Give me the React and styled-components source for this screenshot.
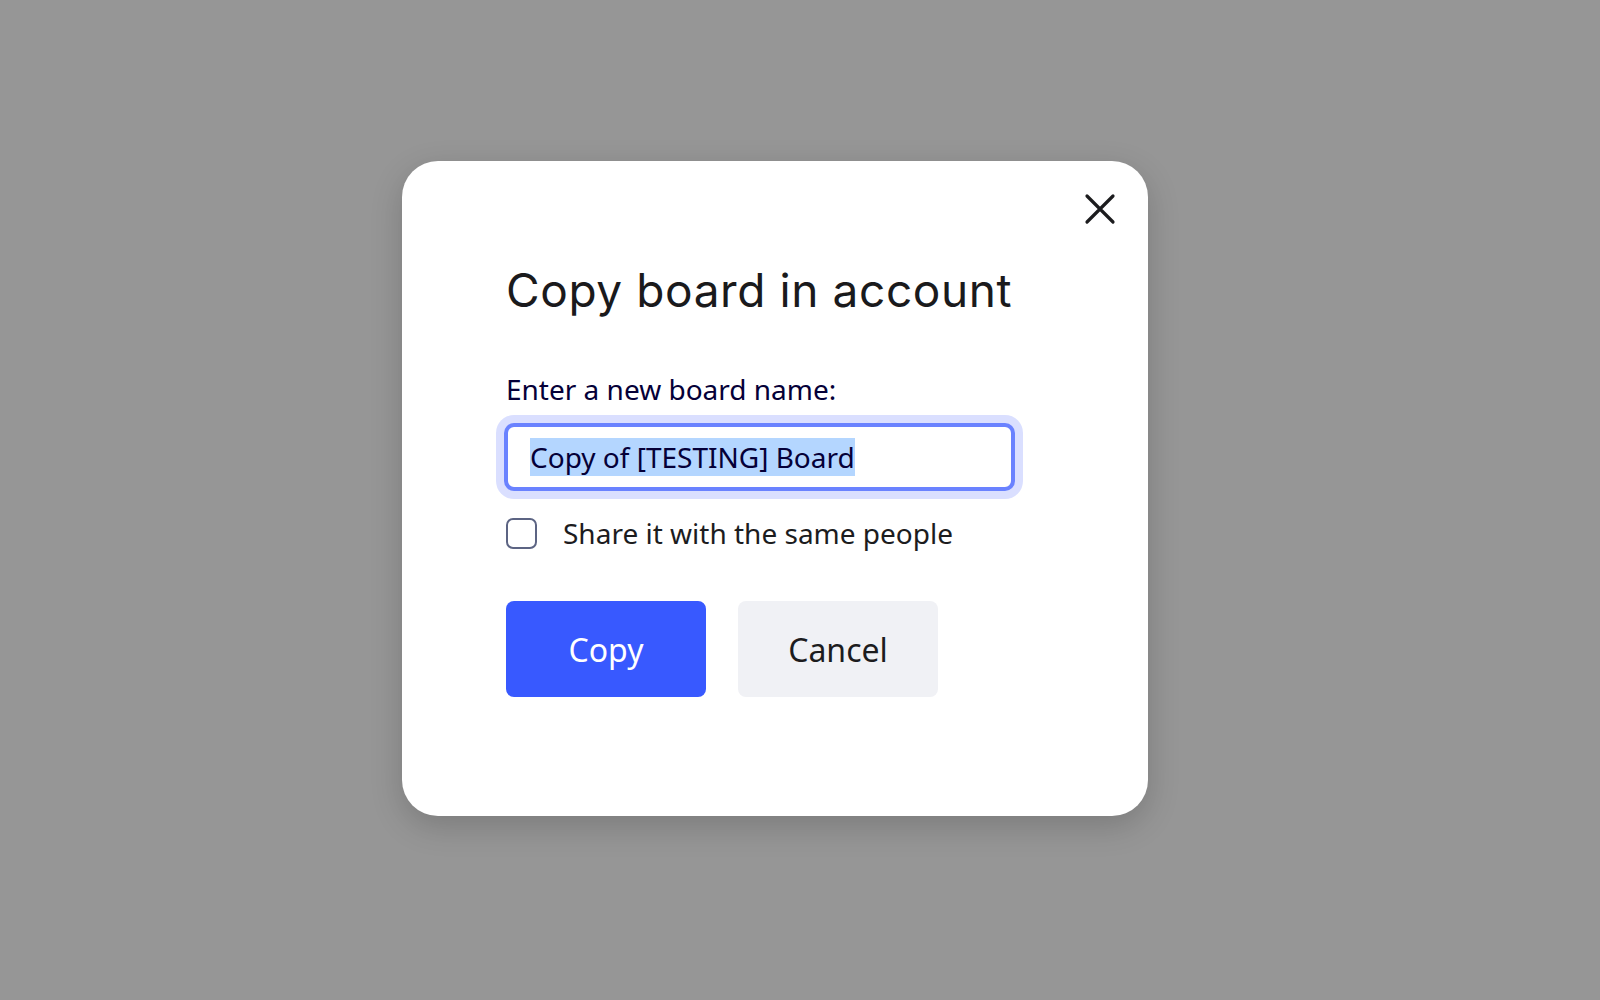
import React, { useEffect, useRef } from "react";
import styled, { createGlobalStyle } from "styled-components";

const Global = createGlobalStyle`
  html, body { margin: 0; padding: 0; }
  body { background: #969696; font-family: "Noto Sans", "Open Sans", sans-serif; }
  * { box-sizing: border-box; }
`;

const Overlay = styled.div`
  width: 1600px;
  height: 1000px;
  display: flex;
  align-items: center;
  justify-content: center;
  padding: 0 50px 23px 0;
  background: #969696;
`;

const Modal = styled.div`
  position: relative;
  width: 746px;
  background: #ffffff;
  border-radius: 36px;
  padding: 102px 104px 119px;
  box-shadow: 0 10px 32px rgba(0, 0, 0, 0.18);
  display: flex;
  flex-direction: column;
`;

const CloseButton = styled.button`
  position: absolute;
  top: 32px;
  right: 32px;
  width: 32px;
  height: 32px;
  padding: 0;
  border: none;
  background: transparent;
  color: #1c1c1e;
  cursor: pointer;
  display: flex;
  align-items: center;
  justify-content: center;
`;

const Title = styled.h1`
  margin: 0;
  font-family: Inter, "Noto Sans", sans-serif;
  font-weight: 400;
  font-size: 46px;
  line-height: 54px;
  color: #1a1a1c;
  letter-spacing: 0.6px;
  white-space: nowrap;
`;

const Label = styled.label`
  margin-top: 52px;
  font-size: 28px;
  line-height: 40px;
  color: #050038;
`;

const Field = styled.input`
  margin-top: 16px;
  width: 507px;
  height: 64px;
  padding: 0 22px;
  border: 2px solid #6a82ff;
  border-radius: 8px;
  box-shadow: 0 0 0 2px #6a82ff, 0 0 0 10px #dadfff;
  font-family: "Noto Sans", sans-serif;
  font-size: 28px;
  color: #050038;
  outline: none;
  background: #fff;
  &::selection {
    background: #b4d6ff;
    color: #050038;
  }
`;

const CheckRow = styled.label`
  margin-top: 24px;
  display: flex;
  align-items: center;
  gap: 26px;
  font-size: 28px;
  line-height: 40px;
  color: #1c1c1e;
  cursor: pointer;
`;

const Box = styled.span`
  width: 31px;
  height: 31px;
  border: 2px solid #5c6483;
  border-radius: 7px;
  background: #fff;
  flex: none;
`;

const Buttons = styled.div`
  margin-top: 48px;
  display: flex;
  gap: 32px;
`;

const Button = styled.button`
  width: 200px;
  height: 96px;
  border: none;
  border-radius: 8px;
  font-family: "Noto Sans", sans-serif;
  font-size: 32px;
  cursor: pointer;
  background: ${(p) => (p.$primary ? "#3859ff" : "#f0f1f5")};
  color: ${(p) => (p.$primary ? "#ffffff" : "#1c1c1e")};
`;

export default function App() {
  const ref = useRef(null);
  useEffect(() => {
    if (ref.current) {
      ref.current.focus();
      ref.current.select();
    }
  }, []);
  return (
    <>
      <Global />
      <Overlay>
        <Modal>
          <CloseButton aria-label="Close">
            <svg width="32" height="32" viewBox="0 0 32 32" fill="none">
              <path d="M3 3 L29 29 M29 3 L3 29" stroke="currentColor" strokeWidth="3.2" strokeLinecap="round" />
            </svg>
          </CloseButton>
          <Title>Copy board in account</Title>
          <Label htmlFor="board-name">Enter a new board name:</Label>
          <Field id="board-name" ref={ref} defaultValue="Copy of [TESTING] Board" />
          <CheckRow>
            <Box />
            Share it with the same people
          </CheckRow>
          <Buttons>
            <Button $primary>Copy</Button>
            <Button>Cancel</Button>
          </Buttons>
        </Modal>
      </Overlay>
    </>
  );
}
